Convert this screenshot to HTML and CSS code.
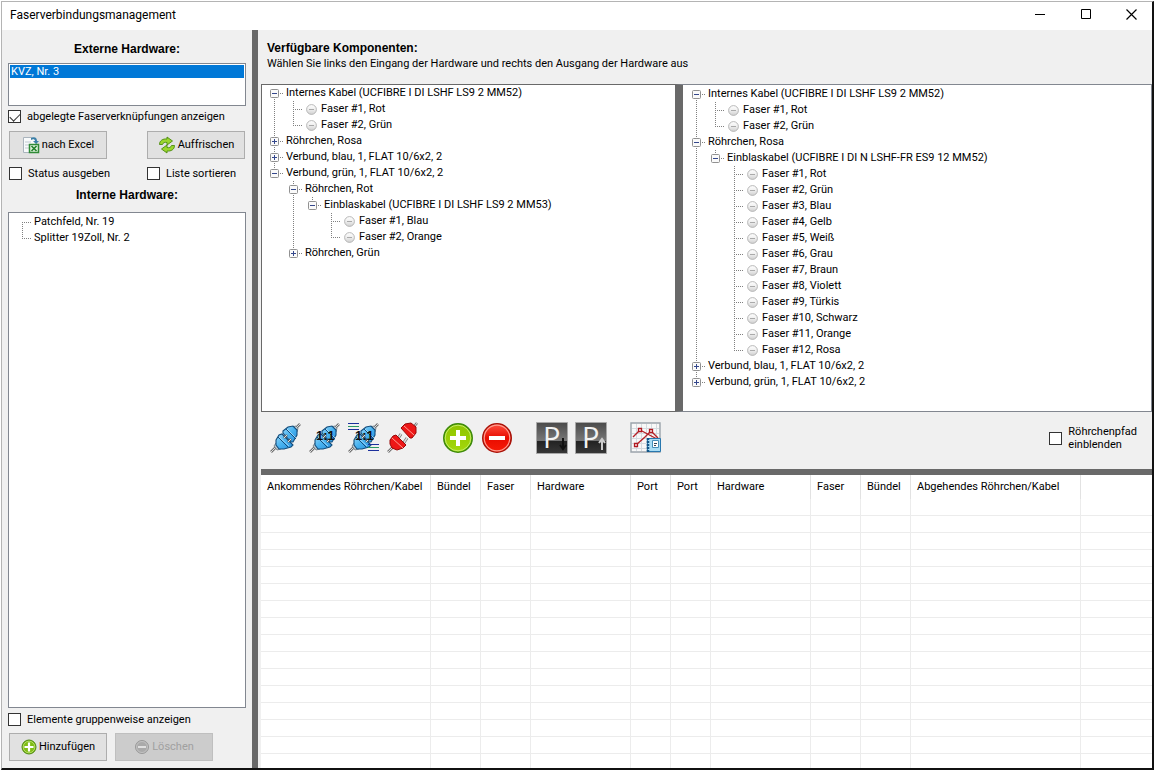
FILE: index.html
```html
<!DOCTYPE html>
<html lang="de">
<head>
<meta charset="utf-8">
<title>Faserverbindungsmanagement</title>
<link rel="stylesheet" href="styles.css">
</head>
<body>
<svg class="defs" width="0" height="0" aria-hidden="true">
  <defs>
    <linearGradient id="ball" x1="0" y1="0" x2="0" y2="1"><stop offset="0" stop-color="#fff"/><stop offset=".45" stop-color="#f0f0f0"/><stop offset="1" stop-color="#d0d0d0"/></linearGradient>
    <linearGradient id="blue" x1="0" y1="0" x2="1" y2="1"><stop offset="0" stop-color="#9ad8f8"/><stop offset=".5" stop-color="#47b2f0"/><stop offset="1" stop-color="#2a8fdc"/></linearGradient>
    <linearGradient id="green" x1="0" y1="0" x2="0" y2="1"><stop offset="0" stop-color="#8fc400"/><stop offset="1" stop-color="#a4d80c"/></linearGradient>
    <linearGradient id="red" x1="0" y1="0" x2="0" y2="1"><stop offset="0" stop-color="#ff5040"/><stop offset=".5" stop-color="#e80c00"/><stop offset="1" stop-color="#f81c08"/></linearGradient>
    <linearGradient id="dark" x1="0" y1="0" x2="0" y2="1"><stop offset="0" stop-color="#4a4a4a"/><stop offset=".58" stop-color="#777"/><stop offset=".6" stop-color="#222"/><stop offset="1" stop-color="#383838"/></linearGradient>
    <symbol id="fiber" viewBox="0 0 11 11"><circle cx="5.500" cy="5.500" r="4.900" fill="url(#ball)" stroke="#b0b0b0" stroke-width=".9"/><path d="M3 5.500h5" stroke="#aaa"/></symbol>
    <symbol id="minus" viewBox="0 0 9 9"><rect x=".5" y=".5" width="8" height="8" rx="1" fill="#fafafa" stroke="#919191"/><path d="M2 4.500h5" stroke="#34478c"/></symbol>
    <symbol id="plus" viewBox="0 0 9 9"><rect x=".5" y=".5" width="8" height="8" rx="1" fill="#fafafa" stroke="#919191"/><path d="M2 4.500h5M4.500 2v5" stroke="#34478c"/></symbol>
    <symbol id="plug" viewBox="0 0 32 32">
      <path d="M1 30l6-6M24 8l6-6" stroke="#707070" stroke-width="2.600"/><path d="M1 30l6-6M24 8l6-6" stroke="#ddd"/>
      <path d="M4 24l3 4 4-1-5-6zM22 5l5 5 1-4-2-2z" fill="#c4cdd2" stroke="#68757c" stroke-width=".8"/>
      <path d="M6 18l3-5 3-1 11 11-2 2-7 2-5 0-3-4z" fill="url(#blue)" stroke="#134d7c" stroke-width="1.100"/>
      <path d="M13 9l5-4 5-1 4 4 0 5-4 7-2 0-8-9z" fill="url(#blue)" stroke="#134d7c" stroke-width="1.100"/>
      <path d="M8 15l10 10M16 7l10 10" stroke="#134d7c" stroke-width="1"/><path d="M9 15l10 9M17 7l9 9" stroke="#bfe8ff" stroke-width=".7"/>
      <path d="M14 16l3-3M18 20l3-3" stroke="#5a5a5a" stroke-width="2.400"/><path d="M14 16l3-3M18 20l3-3" stroke="#ddd"/>
    </symbol>
  </defs>
</svg>
<div class="window">
  <header class="titlebar">
    <h1>Faserverbindungsmanagement</h1>
    <div class="caption-buttons">
      <button type="button" aria-label="Minimieren"><svg width="11" height="11"><path d="M0 5.500h10" stroke="#000"/></svg></button>
      <button type="button" aria-label="Maximieren"><svg width="11" height="11"><path d="M.5.500h9v9h-9z" fill="none" stroke="#000"/></svg></button>
      <button type="button" aria-label="Schließen"><svg width="11" height="11"><path d="M.5.5l10 10M10.500.5l-10 10" stroke="#000" stroke-width="1.200"/></svg></button>
    </div>
  </header>
  <div class="body">
    <aside class="sidebar">
      <h2 id="ext">Externe Hardware:</h2>
      <select class="listbox" size="2" aria-labelledby="ext"><option selected>KVZ, Nr. 3</option></select>
      <label class="check linked"><input type="checkbox" checked>abgelegte Faserverknüpfungen anzeigen</label>
      <div class="pair">
        <div class="stack">
          <button type="button" class="btn"><svg width="18" height="18" viewBox="0 0 18 18"><path d="M1.500 1.500h9l4 3v12h-13z" fill="#f8fafb" stroke="#aab4bd"/><path d="M3 6h6M3 9h4M3 12h4" stroke="#bfc9d0"/><path d="M9 2c4-2 6 0 6 3h2l-3 3-3-3h2c0-2-2-2-4-1z" fill="#3c80a8"/><path d="M7.500 8.500h9v8h-9z" fill="#e2f3df" stroke="#2f8a36" stroke-width="1.500"/><path d="M9.500 10l5 5M14.500 10l-5 5" stroke="#25822e" stroke-width="1.700"/></svg>nach Excel</button>
          <label class="check"><input type="checkbox">Status ausgeben</label>
        </div>
        <div class="stack">
          <button type="button" class="btn"><svg width="18" height="18" viewBox="0 0 18 18"><path d="M1.500 8.500c0-4 3.500-6 7.500-5.500V1l5.500 4L9 9V6.500C7 6 5 6.500 4.500 8.500z" fill="#9ad62c" stroke="#4b8a0c" stroke-width=".9"/><path d="M16.500 9.500c0 4-3.500 6-7.500 5.500v2L3.500 13 9 9v2.500c2 .5 4 0 4.500-2z" fill="#9ad62c" stroke="#4b8a0c" stroke-width=".9"/></svg>Auffrischen</button>
          <label class="check"><input type="checkbox">Liste sortieren</label>
        </div>
      </div>
      <h2>Interne Hardware:</h2>
      <div class="internal">
        <ul class="tree plain">
          <li><span class="row">Patchfeld, Nr. 19</span></li>
          <li><span class="row">Splitter 19Zoll, Nr. 2</span></li>
        </ul>
      </div>
      <label class="check"><input type="checkbox">Elemente gruppenweise anzeigen</label>
      <div class="actions">
        <button type="button" class="btn"><svg width="16" height="16" viewBox="0 0 16 16"><circle cx="8" cy="8" r="7" fill="#80bd14" stroke="#4c8811"/><circle cx="8" cy="8" r="5.800" fill="none" stroke="#c5e884" stroke-width=".7"/><path d="M8 3.500v9M3.500 8h9" stroke="#fff" stroke-width="2.200"/></svg>Hinzufügen</button>
        <button type="button" class="btn" disabled><svg width="16" height="16" viewBox="0 0 16 16"><circle cx="8" cy="8" r="6.500" fill="#aaa" stroke="#999"/><circle cx="8" cy="8" r="5.500" fill="none" stroke="#ccc" stroke-width=".7"/><path d="M4 8h8" stroke="#e0e0e0" stroke-width="2"/></svg>Löschen</button>
      </div>
    </aside>
    <main class="main">
      <div class="intro">
        <h2>Verfügbare Komponenten:</h2>
        <p>Wählen Sie links den Eingang der Hardware und rechts den Ausgang der Hardware aus</p>
      </div>
      <div class="trees">
        <section class="pane" aria-label="Eingang">
          <ul class="tree">
            <li><span class="row"><button type="button" class="toggle" aria-label="Zuklappen"><svg width="9" height="9"><use href="#minus"/></svg></button>Internes Kabel (UCFIBRE I DI LSHF LS9 2 MM52)</span>
              <ul>
                <li><span class="row"><svg class="fiber"><use href="#fiber"/></svg>Faser #1, Rot</span></li>
                <li><span class="row"><svg class="fiber"><use href="#fiber"/></svg>Faser #2, Grün</span></li>
              </ul>
            </li>
            <li><span class="row"><button type="button" class="toggle" aria-label="Aufklappen"><svg width="9" height="9"><use href="#plus"/></svg></button>Röhrchen, Rosa</span></li>
            <li><span class="row"><button type="button" class="toggle" aria-label="Aufklappen"><svg width="9" height="9"><use href="#plus"/></svg></button>Verbund, blau, 1, FLAT 10/6x2, 2</span></li>
            <li><span class="row"><button type="button" class="toggle" aria-label="Zuklappen"><svg width="9" height="9"><use href="#minus"/></svg></button>Verbund, grün, 1, FLAT 10/6x2, 2</span>
              <ul>
                <li><span class="row"><button type="button" class="toggle" aria-label="Zuklappen"><svg width="9" height="9"><use href="#minus"/></svg></button>Röhrchen, Rot</span>
                  <ul>
                    <li><span class="row"><button type="button" class="toggle" aria-label="Zuklappen"><svg width="9" height="9"><use href="#minus"/></svg></button>Einblaskabel (UCFIBRE I DI LSHF LS9 2 MM53)</span>
                      <ul>
                        <li><span class="row"><svg class="fiber"><use href="#fiber"/></svg>Faser #1, Blau</span></li>
                        <li><span class="row"><svg class="fiber"><use href="#fiber"/></svg>Faser #2, Orange</span></li>
                      </ul>
                    </li>
                  </ul>
                </li>
                <li><span class="row"><button type="button" class="toggle" aria-label="Aufklappen"><svg width="9" height="9"><use href="#plus"/></svg></button>Röhrchen, Grün</span></li>
              </ul>
            </li>
          </ul>
        </section>
        <section class="pane output" aria-label="Ausgang">
          <ul class="tree">
            <li><span class="row"><button type="button" class="toggle" aria-label="Zuklappen"><svg width="9" height="9"><use href="#minus"/></svg></button>Internes Kabel (UCFIBRE I DI LSHF LS9 2 MM52)</span>
              <ul>
                <li><span class="row"><svg class="fiber"><use href="#fiber"/></svg>Faser #1, Rot</span></li>
                <li><span class="row"><svg class="fiber"><use href="#fiber"/></svg>Faser #2, Grün</span></li>
              </ul>
            </li>
            <li><span class="row"><button type="button" class="toggle" aria-label="Zuklappen"><svg width="9" height="9"><use href="#minus"/></svg></button>Röhrchen, Rosa</span>
              <ul>
                <li><span class="row"><button type="button" class="toggle" aria-label="Zuklappen"><svg width="9" height="9"><use href="#minus"/></svg></button>Einblaskabel (UCFIBRE I DI N LSHF-FR ES9 12 MM52)</span>
                  <ul>
                    <li><span class="row"><svg class="fiber"><use href="#fiber"/></svg>Faser #1, Rot</span></li>
                    <li><span class="row"><svg class="fiber"><use href="#fiber"/></svg>Faser #2, Grün</span></li>
                    <li><span class="row"><svg class="fiber"><use href="#fiber"/></svg>Faser #3, Blau</span></li>
                    <li><span class="row"><svg class="fiber"><use href="#fiber"/></svg>Faser #4, Gelb</span></li>
                    <li><span class="row"><svg class="fiber"><use href="#fiber"/></svg>Faser #5, Weiß</span></li>
                    <li><span class="row"><svg class="fiber"><use href="#fiber"/></svg>Faser #6, Grau</span></li>
                    <li><span class="row"><svg class="fiber"><use href="#fiber"/></svg>Faser #7, Braun</span></li>
                    <li><span class="row"><svg class="fiber"><use href="#fiber"/></svg>Faser #8, Violett</span></li>
                    <li><span class="row"><svg class="fiber"><use href="#fiber"/></svg>Faser #9, Türkis</span></li>
                    <li><span class="row"><svg class="fiber"><use href="#fiber"/></svg>Faser #10, Schwarz</span></li>
                    <li><span class="row"><svg class="fiber"><use href="#fiber"/></svg>Faser #11, Orange</span></li>
                    <li><span class="row"><svg class="fiber"><use href="#fiber"/></svg>Faser #12, Rosa</span></li>
                  </ul>
                </li>
              </ul>
            </li>
            <li><span class="row"><button type="button" class="toggle" aria-label="Aufklappen"><svg width="9" height="9"><use href="#plus"/></svg></button>Verbund, blau, 1, FLAT 10/6x2, 2</span></li>
            <li><span class="row"><button type="button" class="toggle" aria-label="Aufklappen"><svg width="9" height="9"><use href="#plus"/></svg></button>Verbund, grün, 1, FLAT 10/6x2, 2</span></li>
          </ul>
        </section>
      </div>
      <div class="toolbar">
        <div class="group">
          <button type="button" class="tool" aria-label="Verbinden"><svg width="32" height="32"><use href="#plug"/></svg></button>
          <button type="button" class="tool" aria-label="1:1 verbinden"><svg width="32" height="32"><use href="#plug"/><text x="7" y="18" class="ratio">1:1</text></svg></button>
          <button type="button" class="tool" aria-label="Alle 1:1 verbinden"><svg width="32" height="32"><use href="#plug"/><path d="M0 1.500h11M0 7.500h11M20 22.500h11M20 28.500h11" stroke="#1c2f9c"/><path d="M0 4.500h11M20 25.500h11" stroke="#2b9a62"/><text x="7" y="18" class="ratio">1:1</text></svg></button>
          <button type="button" class="tool" aria-label="Trennen"><svg width="32" height="32" viewBox="0 0 32 32"><path d="M1 30l6-6M25 7l5-6" stroke="#777" stroke-width="2.600"/><path d="M1 30l5-5M26 6l4-5" stroke="#ddd"/><path d="M10 18l4-6M16 22l4-6" stroke="#777" stroke-width="3"/><path d="M10 18l4-6M16 22l4-6" stroke="#ddd" stroke-width="1.400"/><path d="M3 18l3-4 3-1 10 10-3 3-6 2-5-2-2-4z" fill="#ed1717" stroke="#980808"/><path d="M5 16l11 10" stroke="#ff9d94"/><path d="M14 6l4-4 6-1 5 4 0 6-4 5-2 0z" fill="#ed1717" stroke="#980808"/><path d="M17 4l10 9" stroke="#ff9d94"/></svg></button>
        </div>
        <div class="group">
          <button type="button" class="tool" aria-label="Hinzufügen"><svg width="32" height="32" viewBox="0 0 32 32"><circle cx="16" cy="16" r="14.200" fill="url(#green)" stroke="#3e8a0c" stroke-width="1.600"/><circle cx="16" cy="16" r="12.800" fill="none" stroke="#c4ee65"/><path d="M16 8v16M8 16h16" stroke="#fff" stroke-width="4"/></svg></button>
          <button type="button" class="tool" aria-label="Entfernen"><svg width="32" height="32" viewBox="0 0 32 32"><circle cx="16" cy="16" r="14.200" fill="url(#red)" stroke="#a81208" stroke-width="1.600"/><circle cx="16" cy="16" r="12.800" fill="none" stroke="#ff9c8e" stroke-width="1.200"/><path d="M8 16h16" stroke="#fff" stroke-width="4"/></svg></button>
        </div>
        <div class="group">
          <button type="button" class="tool" aria-label="Parken"><svg width="32" height="32" viewBox="0 0 32 32"><path d="M.5.500h31v31H.5z" fill="url(#dark)" stroke="#a8a8a8"/><text x="7" y="26" class="park">P</text><path d="M27 16v10M24 23l3 4 3-4" stroke="#111" stroke-width="2" fill="none"/></svg></button>
          <button type="button" class="tool" aria-label="Geparkte abrufen"><svg width="32" height="32" viewBox="0 0 32 32"><path d="M.5.500h31v31H.5z" fill="url(#dark)" stroke="#a8a8a8"/><text x="7" y="26" class="park">P</text><path d="M27 28V18M24 21l3-4 3 4" stroke="#ccc" stroke-width="2" fill="none"/></svg></button>
        </div>
        <div class="group">
          <button type="button" class="tool" aria-label="Dämpfungsdiagramm"><svg width="32" height="32" viewBox="0 0 32 32"><path d="M1 1h29v29H1z" fill="#f8f8f8" stroke="#9aa3aa" stroke-width="1.400"/><path d="M6.500 2v27M11.500 2v27M16.500 2v27M21.500 2v27M26.500 2v27M2 6.500h27M2 11.500h27M2 16.500h27M2 21.500h27M2 26.500h27" stroke="#d4dbe0"/><path d="M3 15l7-7 17 9M6 23l9-8 6-6 7 7" fill="none" stroke="#b52228" stroke-width="1.400"/><path d="M8.500 6.500h3v3h-3zM4.500 21.500h3v3h-3zM19.500 7.500h3v3h-3z" fill="#fff" stroke="#b01820" stroke-width="1.300"/><path d="M17.500 16.500h13v13h-13z" fill="#a9ddf5" stroke="#2877ae"/><path d="M18 16v14" stroke="#135587" stroke-width="2.500" stroke-dasharray="2 1"/><path d="M22.500 18.500h6v7h-6z" fill="#fff" stroke="#448eb9"/><path d="M24 21.500h3M24 23.500h2" stroke="#345"/></svg></button>
        </div>
        <label class="check path"><input type="checkbox"><span>Röhrchenpfad<br>einblenden</span></label>
      </div>
      <div class="grid">
        <table>
          <colgroup><col class="cable"><col class="small"><col class="small"><col class="hardware"><col class="port"><col class="port"><col class="hardware"><col class="small"><col class="small"><col class="cable-out"><col></colgroup>
          <thead><tr><th>Ankommendes Röhrchen/Kabel</th><th>Bündel</th><th>Faser</th><th>Hardware</th><th>Port</th><th>Port</th><th>Hardware</th><th>Faser</th><th>Bündel</th><th>Abgehendes Röhrchen/Kabel</th><td></td></tr></thead>
          <tbody>
            <tr><td></td><td></td><td></td><td></td><td></td><td></td><td></td><td></td><td></td><td></td><td></td></tr>
            <tr><td></td><td></td><td></td><td></td><td></td><td></td><td></td><td></td><td></td><td></td><td></td></tr>
            <tr><td></td><td></td><td></td><td></td><td></td><td></td><td></td><td></td><td></td><td></td><td></td></tr>
            <tr><td></td><td></td><td></td><td></td><td></td><td></td><td></td><td></td><td></td><td></td><td></td></tr>
            <tr><td></td><td></td><td></td><td></td><td></td><td></td><td></td><td></td><td></td><td></td><td></td></tr>
            <tr><td></td><td></td><td></td><td></td><td></td><td></td><td></td><td></td><td></td><td></td><td></td></tr>
            <tr><td></td><td></td><td></td><td></td><td></td><td></td><td></td><td></td><td></td><td></td><td></td></tr>
            <tr><td></td><td></td><td></td><td></td><td></td><td></td><td></td><td></td><td></td><td></td><td></td></tr>
            <tr><td></td><td></td><td></td><td></td><td></td><td></td><td></td><td></td><td></td><td></td><td></td></tr>
            <tr><td></td><td></td><td></td><td></td><td></td><td></td><td></td><td></td><td></td><td></td><td></td></tr>
            <tr><td></td><td></td><td></td><td></td><td></td><td></td><td></td><td></td><td></td><td></td><td></td></tr>
            <tr><td></td><td></td><td></td><td></td><td></td><td></td><td></td><td></td><td></td><td></td><td></td></tr>
            <tr><td></td><td></td><td></td><td></td><td></td><td></td><td></td><td></td><td></td><td></td><td></td></tr>
            <tr><td></td><td></td><td></td><td></td><td></td><td></td><td></td><td></td><td></td><td></td><td></td></tr>
            <tr><td></td><td></td><td></td><td></td><td></td><td></td><td></td><td></td><td></td><td></td><td></td></tr>
            <tr><td></td><td></td><td></td><td></td><td></td><td></td><td></td><td></td><td></td><td></td><td></td></tr>
          </tbody>
        </table>
      </div>
    </main>
  </div>
</div>
</body>
</html>
```
FILE: styles.css
```css
* { box-sizing: border-box; }
body {
  margin: 0;
  background: #fff;
  color: #000;
  font: 11px/16px Roboto, "Liberation Sans", Arial, sans-serif;
}
button, select, input { font: inherit; color: inherit; margin: 0; }
h1, h2, p, ul { margin: 0; padding: 0; }
ul { list-style: none; }
svg { display: block; flex: none; }
.defs { position: absolute; }

.window {
  display: flex;
  flex-direction: column;
  height: 100vh;
  min-height: 600px;
  padding: 1px 0 0 1px;
}
.titlebar {
  display: flex;
  align-items: flex-start;
  justify-content: space-between;
  height: 29px;
  flex: none;
  padding: 0 7px 0 8px;
  border: solid #b4b4b4;
  border-width: 1px 0 0 1px;
  border-right: 2px solid #111;
}
.titlebar h1 { font: 12px/26px Roboto, "Open Sans", sans-serif; }
.caption-buttons { display: flex; }
.caption-buttons button {
  display: grid;
  place-items: center;
  width: 46px;
  height: 25px;
  padding: 0;
  border: 0;
  background: none;
}
.caption-buttons button:last-child { width: 27px; margin-left: 9px; }

.body {
  display: flex;
  flex: 1;
  min-height: 0;
  border: solid #111;
  border-width: 0 2px 2px 0;
  border-left: 1px solid #b4b4b4;
}
.sidebar {
  display: flex;
  flex-direction: column;
  flex: none;
  width: 256px;
  padding: 11px 6px 7px;
  background: #f0f0f0;
  border-right: 6px solid #696969;
}
h2 { font: bold 12px/16px "Liberation Sans", Arial, sans-serif; }
.sidebar h2 { text-align: center; }
.listbox {
  height: 43px;
  margin: 6px 0 4px;
  padding: 1px;
  border: 1px solid #828790;
  border-radius: 0;
  background: #fff;
  outline: 0;
  overflow: hidden;
}
.listbox option { min-height: 13px; padding: 0 1px; line-height: 13px; }
.listbox option:checked { background: linear-gradient(#0078d7, #0078d7); color: #fff; }
.check { display: flex; align-items: center; gap: 6px; line-height: 13px; }
.check input {
  appearance: none;
  flex: none;
  width: 13px;
  height: 13px;
  border: 1px solid #333;
  background: #fff;
}
.check input:checked {
  display: grid;
  place-items: center;
}
.check input:checked::before {
  content: "";
  width: 9px;
  height: 5px;
  border: solid #333;
  border-width: 0 0 1px 1px;
  transform: translateY(-1px) rotate(-45deg);
}
.linked { margin-bottom: 8px; }
.pair { display: flex; justify-content: space-between; padding: 0 1px; margin-bottom: 7px; }
.stack { display: flex; flex-direction: column; gap: 8px; }
.btn {
  display: flex;
  align-items: center;
  justify-content: center;
  gap: 2px;
  width: 98px;
  height: 28px;
  padding: 0;
  border: 1px solid #adadad;
  background: #e1e1e1;
}
.btn:disabled { background: #ccc; border-color: #bfbfbf; color: #a0a0a0; }
.internal {
  flex: 1;
  margin: 9px 0 5px;
  border: 1px solid #828790;
  background: #fff;
}
.actions { display: flex; gap: 8px; margin-top: 7px; padding-left: 1px; }

.main {
  display: flex;
  flex-direction: column;
  flex: 1;
  min-width: 0;
  padding-left: 3px;
  background: #f0f0f0;
}
.intro { padding: 10px 6px 12px; }
.trees { display: grid; grid-template-columns: 414fr 477fr; flex: none; height: 328px; }
.pane {
  min-width: 0;
  border: 1px solid #696969;
  border-right: 0;
  background: #fff;
  overflow: hidden;
}
.pane.output {
  border: 1px solid #828790;
  border-left: 8px solid #696969;
  padding-top: 1px;
}
.tree { padding-left: 3px; }
.output .tree { padding-left: 4px; }
.tree li { position: relative; }
.tree li::before {
  content: "";
  position: absolute;
  top: 0;
  bottom: 0;
  left: 9px;
  width: 1px;
  background: repeating-linear-gradient(#808080 0 1px, transparent 1px 2px);
}
.tree > li:first-child::before { top: 8px; }
.tree li:last-child::before { bottom: auto; height: 8px; }
.tree ul { padding-left: 19px; }
.row {
  position: relative;
  display: flex;
  align-items: center;
  height: 16px;
  padding-left: 21px;
  white-space: nowrap;
}
.row::before {
  content: "";
  position: absolute;
  top: 8px;
  left: 9px;
  width: 10px;
  height: 1px;
  background: repeating-linear-gradient(90deg, #808080 0 1px, transparent 1px 2px);
}
.toggle {
  position: absolute;
  top: 4px;
  left: 5px;
  width: 9px;
  height: 9px;
  padding: 0;
  border: 0;
  background: none;
}
.fiber { width: 11px; height: 11px; margin: 0 4px 0 1px; }
.plain { padding: 1px 0 0 4px; }

.toolbar {
  display: flex;
  align-items: center;
  gap: 23px;
  flex: none;
  height: 57px;
  padding: 0 15px 5px 9px;
}
.group { display: flex; gap: 7px; }
.tool { width: 32px; height: 32px; padding: 0; border: 0; background: none; }
.tool svg { overflow: visible; }
.ratio { font: bold 13px "Liberation Sans", Arial, sans-serif; fill: #111; }
.park { font: 29px "Open Sans", sans-serif; fill: #f2f2f2; }
.path { margin-left: auto; }

.grid { flex: 1; min-height: 0; overflow: hidden; border-top: 6px solid #696969; background: #fff; }
table { width: 100%; table-layout: fixed; border-collapse: separate; border-spacing: 0; }
.cable, .cable-out { width: 170px; }
.small { width: 50px; }
.hardware { width: 100px; }
.port { width: 40px; }
th { padding: 0 6px; font-weight: normal; text-align: left; white-space: nowrap; border-right: 1px solid #e2e2e2; }
thead td { padding: 0; }
thead tr { height: 24px; }
tbody td { height: 17px; padding: 0; border: solid #ececec; border-width: 0 1px 1px 0; }
tbody td:last-child { border-right: 0; }
```
